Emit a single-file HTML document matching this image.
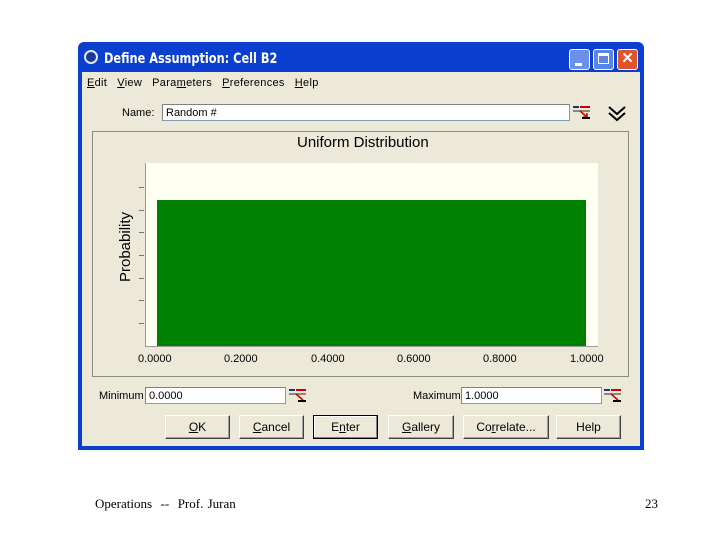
<!DOCTYPE html><html><head><style>
body{margin:0;width:720px;height:540px;background:#fff;position:relative;font-family:"Liberation Sans",sans-serif;overflow:hidden}
.a{position:absolute}
.win{left:78px;top:42px;width:566px;height:408px;background:#0a3fd0;border-radius:6px 6px 0 0}
.body{left:82px;top:72px;width:558px;height:374px;background:#ece9d8}
.t{font-size:11px;color:#000;white-space:nowrap}
.inp{background:#fff;border:1px solid #7f9db9;border-top-color:#808080;border-left-color:#808080;height:17px;font-size:11px;line-height:17px;padding-left:3px;box-sizing:border-box}
.btn{background:#ece9d8;border:1px solid #fff;border-right-color:#404040;border-bottom-color:#404040;box-shadow:inset -1px -1px #a0a0a0;height:24px;font-size:12px;text-align:center;line-height:22px;box-sizing:border-box}
.tick{width:5px;height:1px;background:#777;left:139px}
.xl{font-size:11px;top:353px}
</style></head><body>
<div class="a win"></div>
<div class="a" style="left:84px;top:50px;width:14px;height:14px;border-radius:50%;background:#1a3a9a;border:2px solid #dfe8ff;box-sizing:border-box"></div>
<div class="a" style="left:104px;top:51px;color:#fff;font-weight:bold;font-size:14px;font-family:'DejaVu Sans Condensed','DejaVu Sans',sans-serif;transform:scaleX(0.9);transform-origin:left">Define Assumption: Cell B2</div>
<div class="a" style="left:569px;top:49px;width:21px;height:21px;background:#6a90ea;border:1px solid #fff;border-radius:3px;box-sizing:border-box"><div class="a" style="left:5px;top:13px;width:7px;height:3px;background:#fff"></div></div>
<div class="a" style="left:593px;top:49px;width:21px;height:21px;background:#5a84ea;border:1px solid #fff;border-radius:3px;box-sizing:border-box"><div class="a" style="left:4px;top:3px;width:11px;height:11px;border:1px solid #fff;border-top-width:3px;box-sizing:border-box"></div></div>
<div class="a" style="left:617px;top:49px;width:21px;height:21px;background:#e0542c;border:1px solid #fff;border-radius:3px;box-sizing:border-box;color:#fff;font-weight:bold;font-size:15px;line-height:18px;text-align:center">✕</div>
<div class="a body"></div>
<div class="a t" style="left:87px;top:77px;letter-spacing:0.3px"><u>E</u>dit &nbsp; <u>V</u>iew &nbsp; Para<u>m</u>eters &nbsp; <u>P</u>references &nbsp; <u>H</u>elp</div>
<div class="a t" style="left:122px;top:107px">Name:</div>
<div class="a inp" style="left:162px;top:104px;width:408px">Random #</div>
<svg class="a" style="left:572px;top:105px" width="20" height="16"><rect x="1" y="1" width="6" height="2" fill="#203080"/><rect x="8" y="1" width="10" height="2" fill="#c00"/><rect x="1" y="5" width="17" height="2" fill="#888"/><path d="M8 6 L15 12 M11 12 H15 V8" stroke="#c00" stroke-width="1.5" fill="none"/><rect x="10" y="12" width="8" height="2" fill="#000"/></svg>
<svg class="a" style="left:606px;top:103px" width="22" height="20"><path d="M3 4 L11 11 L19 4 M3 10 L11 17 L19 10" stroke="#000" stroke-width="2" fill="none"/></svg>
<div class="a" style="left:92px;top:131px;width:537px;height:246px;border:1px solid #8a8a7a;box-sizing:border-box"></div>
<div class="a" style="left:297px;top:134px;font-size:15px">Uniform Distribution</div>
<div class="a" style="left:145px;top:163px;width:453px;height:184px;background:#fffff2;border-left:1px solid #999;border-bottom:1px solid #999;box-sizing:border-box"></div>
<div class="a" style="left:157px;top:200px;width:429px;height:146px;background:#008000"></div>
<div class="a tick" style="top:187px"></div><div class="a tick" style="top:210px"></div><div class="a tick" style="top:232px"></div><div class="a tick" style="top:255px"></div><div class="a tick" style="top:278px"></div><div class="a tick" style="top:300px"></div><div class="a tick" style="top:323px"></div>
<div class="a" style="left:96px;top:244px;font-size:15px;transform:rotate(-90deg);transform-origin:center;width:60px;text-align:center;line-height:16px">Probability</div>
<div class="a t xl" style="left:138px">0.0000</div>
<div class="a t xl" style="left:224px">0.2000</div>
<div class="a t xl" style="left:311px">0.4000</div>
<div class="a t xl" style="left:397px">0.6000</div>
<div class="a t xl" style="left:483px">0.8000</div>
<div class="a t xl" style="left:570px">1.0000</div>
<div class="a t" style="left:99px;top:390px">Minimum</div>
<div class="a inp" style="left:145px;top:387px;width:141px">0.0000</div>
<svg class="a" style="left:288px;top:388px" width="20" height="16"><rect x="1" y="1" width="6" height="2" fill="#203080"/><rect x="8" y="1" width="10" height="2" fill="#c00"/><rect x="1" y="5" width="17" height="2" fill="#888"/><path d="M8 6 L15 12" stroke="#c00" stroke-width="1.5"/><rect x="10" y="12" width="8" height="2" fill="#000"/></svg>
<div class="a t" style="left:413px;top:390px">Maximum</div>
<div class="a inp" style="left:461px;top:387px;width:141px">1.0000</div>
<svg class="a" style="left:603px;top:388px" width="20" height="16"><rect x="1" y="1" width="6" height="2" fill="#203080"/><rect x="8" y="1" width="10" height="2" fill="#c00"/><rect x="1" y="5" width="17" height="2" fill="#888"/><path d="M8 6 L15 12" stroke="#c00" stroke-width="1.5"/><rect x="10" y="12" width="8" height="2" fill="#000"/></svg>
<div class="a btn" style="left:165px;top:415px;width:65px"><u>O</u>K</div>
<div class="a btn" style="left:239px;top:415px;width:65px"><u>C</u>ancel</div>
<div class="a btn" style="left:313px;top:415px;width:65px;border:1px solid #000;box-shadow:inset -1px -1px #808080,inset 1px 1px #fff">E<u>n</u>ter</div>
<div class="a btn" style="left:388px;top:415px;width:66px"><u>G</u>allery</div>
<div class="a btn" style="left:463px;top:415px;width:86px">Co<u>r</u>relate...</div>
<div class="a btn" style="left:556px;top:415px;width:65px">Help</div>
<div class="a" style="left:95px;top:496px;font-family:'Liberation Serif',serif;font-size:13px;word-spacing:1px;white-space:pre">Operations  --  Prof. Juran</div>
<div class="a" style="left:645px;top:496px;font-family:'Liberation Serif',serif;font-size:13px">23</div>
</body></html>
